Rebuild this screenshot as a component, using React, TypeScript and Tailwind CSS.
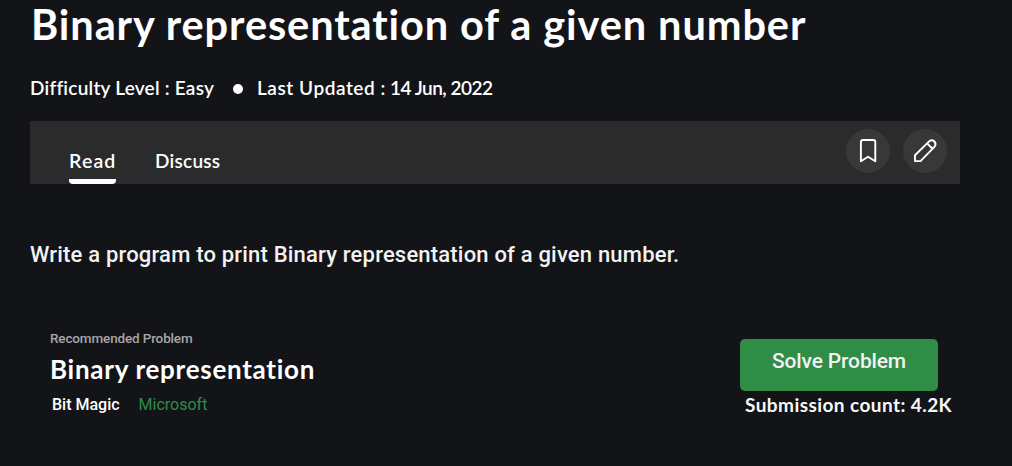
export default function App() {
  return (
    <main className="h-[466px] w-[1012px] overflow-hidden bg-[#131418] pl-[30px] text-white">
      <h1 className="h-[52px] pl-px whitespace-nowrap font-['Lato',sans-serif] text-[41.5px] leading-[49px] font-bold tracking-[0.91px]">Binary representation of a given number</h1>
      <div className="mt-[24px] flex h-[24px] items-center whitespace-nowrap font-['Lato',sans-serif] text-[19px] leading-[24px] font-semibold">
        <span className="w-[184px] tracking-[0.23px]">Difficulty Level : Easy</span>
        <span className="mt-[2px] mr-[14px] ml-[19px] h-[10px] w-[10px] rounded-full bg-white" />
        <span className="w-[133px] tracking-[0.55px]">Last Updated :</span>
        <span className="tracking-[-0.5px]">14 Jun, 2022</span>
      </div>
      <nav className="mt-[21px] flex h-[63px] w-[930px] justify-between bg-[#2b2b2b] pr-[13px] pl-[39px] font-['Lato',sans-serif] text-[19px] font-semibold">
        <div className="flex gap-[39px] pt-[28px]">
          <div className="flex h-[35px] w-[47px] flex-col justify-between whitespace-nowrap leading-[24px]">
            <span className="text-[19.5px] leading-[23px] tracking-[1.15px]">Read</span>
            <span className="h-[5px] w-[47px] rounded-b-[4px] bg-white" />
          </div>
          <span className="leading-[24px] tracking-[0.25px]">Discuss</span>
        </div>
        <div className="flex gap-[13px] pt-[8px]">
          <button className="flex h-[44px] w-[44px] items-center justify-center rounded-full bg-[#38383a]" aria-label="Bookmark">
            <svg width="44" height="44" viewBox="0 0 44 44" fill="none" stroke="white" strokeWidth="1.9" strokeLinejoin="round"><path d="M14.9 32.2V13.2Q14.9 11 17.1 11H27.1Q29.3 11 29.3 13.2V32.2L22.1 27.8Z" /></svg>
          </button>
          <button className="flex h-[44px] w-[44px] items-center justify-center rounded-full bg-[#38383a]" aria-label="Edit">
            <svg width="44" height="44" viewBox="0 0 44 44" fill="none" stroke="white" strokeWidth="1.9" strokeLinejoin="round"><path d="M12 32.1V26.3L26.1 12.4Q29 10.2 31.4 12.5Q33.7 15 31.4 17.9L17.5 32.1ZM24.1 14.4L29.6 19.8" /></svg>
          </button>
        </div>
      </nav>
      <p className="mt-[56px] h-[30px] whitespace-nowrap font-['Roboto',sans-serif] text-[22px] leading-[30px] font-medium tracking-[0.19px] text-[#f2f2f2]">Write a program to print Binary representation of a given number.</p>
      <section className="mt-[58px] flex w-[930px] justify-between pl-[20px]">
        <div className="whitespace-nowrap">
          <div className="h-[20px] font-['Roboto',sans-serif] text-[13.5px] leading-[20px] font-medium tracking-[-0.15px] text-[#a6a6a6]">Recommended Problem</div>
          <h2 className="mt-[5px] h-[32px] font-['Lato',sans-serif] text-[26px] leading-[32px] font-bold tracking-[0.72px]">Binary representation</h2>
          <div className="mt-[10px] flex gap-[19px] pl-[2px] font-['Roboto',sans-serif] text-[16px] leading-[20px]">
            <span className="font-medium">Bit Magic</span>
            <span className="text-[#2f8d46]">Microsoft</span>
          </div>
        </div>
        <div className="w-[220px] pt-[11px]">
          <button className="block h-[52px] w-[198px] rounded-[5px] bg-[#2f8d46] pb-[9px] font-['Roboto',sans-serif] text-[21px] leading-[30px] font-medium tracking-[-0.15px] text-[#f2f2f2]">Solve Problem</button>
          <div className="mt-[2px] pl-[5px] whitespace-nowrap font-['Lato',sans-serif] text-[19px] leading-[24px] font-bold tracking-[0.43px] text-[#f7f7f7]">Submission count: 4.2K</div>
        </div>
      </section>
    </main>
  );
}
